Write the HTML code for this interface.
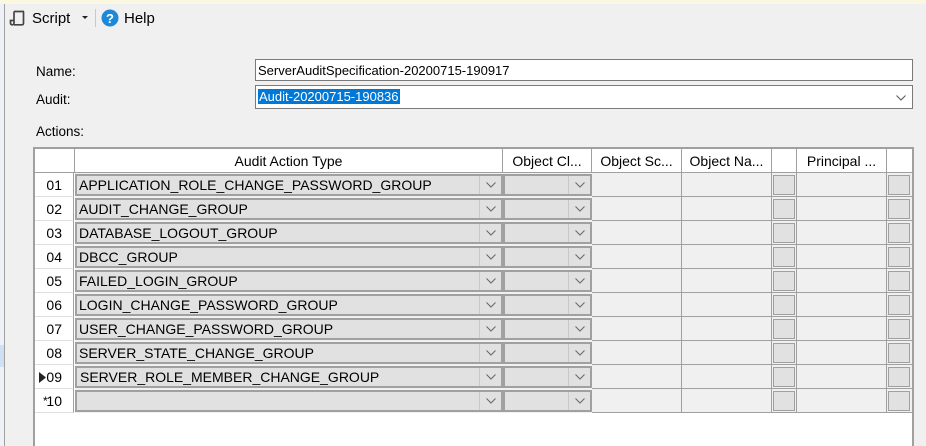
<!DOCTYPE html>
<html><head><style>
*{margin:0;padding:0;box-sizing:border-box}
body{width:926px;height:446px;background:#f0f0f0;font-family:"Liberation Sans",sans-serif;font-size:13px;color:#000;position:relative;overflow:hidden}
.a{position:absolute}
.row{position:absolute;left:35px;width:877px;height:24px;font-size:14px}
.c{position:absolute;top:0;height:24px;border-right:1px solid #a0a0a0;border-bottom:1px solid #a0a0a0}
.cb{position:absolute;top:1px;height:22px;background:#e1e1e1;border:2px solid #a0a0a0}
.ar{position:absolute;right:0;top:0;width:22px;height:18px;border-left:1px solid #c8c8c8}
.ar svg{position:absolute;left:6px;top:6px}
.chk{position:absolute;top:2px;height:20px;background:#e1e1e1;border:1px solid #a0a0a0}
.hd{position:absolute;top:0;height:24px;line-height:24px;text-align:center;border-right:1px solid #a0a0a0;border-bottom:1px solid #a0a0a0;background:#fff;font-size:14px}
.txt{position:absolute;left:2px;top:1px;line-height:17px;font-size:14px}
.num{position:absolute;left:0;width:39px;height:24px;line-height:24px;text-align:right;padding-right:11px;background:#fff;border-right:1px solid #a0a0a0;border-bottom:1px solid #e0e0e0}
</style></head><body>
<div class="a" style="left:0;top:0;width:926px;height:4px;background:#fbf8e2"></div>
<div class="a" style="left:0;top:4px;width:4px;height:442px;background:#eef2f8"></div>
<div class="a" style="left:4px;top:4px;width:1px;height:442px;background:#a0a0a0"></div>
<div class="a" style="left:0;top:345px;width:4px;height:22px;background:#cfe0f4"></div>
<svg class="a" style="left:9px;top:9px" width="17" height="17" viewBox="0 0 17 17"><path d="M5 2.5h10M5 2.5v11.5c0 1-0.7 1.8-1.8 1.8S1.5 15 1.5 14v-2.5H5M5 15.8h8c1 0 1.5-.8 1.5-1.8V2.5" fill="none" stroke="#444" stroke-width="1.7"/></svg>
<div class="a" style="left:32px;top:10px;font-size:15px">Script</div>
<svg class="a" style="left:82px;top:16px" width="6" height="4"><path d="M0 0h6L3 3z" fill="#222"/></svg>
<div class="a" style="left:95px;top:9px;width:1px;height:18px;background:#c8c8c8"></div>
<svg class="a" style="left:101px;top:9px" width="18" height="18"><circle cx="9" cy="9" r="8.5" fill="#1e88d8"/><text x="9" y="14" font-family="Liberation Sans" font-weight="bold" font-size="13" fill="#fff" text-anchor="middle">?</text></svg>
<div class="a" style="left:124px;top:10px;font-size:15px">Help</div>
<div class="a" style="left:36px;top:64px;font-size:13.5px">Name:</div>
<div class="a" style="left:36px;top:92px;font-size:13.5px">Audit:</div>
<div class="a" style="left:36px;top:124px;font-size:13.5px">Actions:</div>
<div class="a" style="left:255px;top:59px;width:658px;height:22px;background:#fff;border:1px solid #7a7a7a"><span style="position:absolute;left:2px;top:3px">ServerAuditSpecification-20200715-190917</span></div>
<div class="a" style="left:255px;top:85px;width:658px;height:24px;background:#fff;border:1px solid #7a7a7a"><span style="position:absolute;left:2px;top:3px;background:#0078d7;color:#fff;padding:0 1px">Audit-20200715-190836</span><svg style="position:absolute;right:6px;top:9px" width="10" height="6"><path d="M0.5 0.5l4.5 4.5 4.5-4.5" fill="none" stroke="#555"/></svg></div>
<div class="a" style="left:33px;top:147px;width:881px;height:299px;background:#fff;border:2px solid #a0a0a0;border-bottom:none"></div>
<div class="row" style="top:149px">
<div class="hd" style="left:0;width:40px"></div>
<div class="hd" style="left:40px;width:428px">Audit Action Type</div>
<div class="hd" style="left:468px;width:89px">Object Cl...</div>
<div class="hd" style="left:557px;width:90px">Object Sc...</div>
<div class="hd" style="left:647px;width:90px">Object Na...</div>
<div class="hd" style="left:737px;width:25px"></div>
<div class="hd" style="left:762px;width:90px">Principal ...</div>
<div class="hd" style="left:852px;width:25px;border-right:none"></div>
</div>
<div class="row" style="top:173px"><div class="num">01</div><div class="c" style="left:40px;width:837px;background:#f0f0f0;border:none"></div><div class="cb" style="left:40px;width:428px"><span class="txt">APPLICATION_ROLE_CHANGE_PASSWORD_GROUP</span><div class="ar"><svg width="10" height="6"><path d="M0.5 0.5l4.5 4.5 4.5-4.5" fill="none" stroke="#666"/></svg></div></div><div class="cb" style="left:468px;width:89px"><div class="ar"><svg width="10" height="6"><path d="M0.5 0.5l4.5 4.5 4.5-4.5" fill="none" stroke="#666"/></svg></div></div><div class="c" style="left:557px;width:90px"></div><div class="c" style="left:647px;width:90px"></div><div class="c" style="left:737px;width:25px"><div class="chk" style="left:1px;width:22px"></div></div><div class="c" style="left:762px;width:90px"></div><div class="c" style="left:852px;width:25px;border-right:none"><div class="chk" style="left:1px;width:22px"></div></div></div>
<div class="row" style="top:197px"><div class="num">02</div><div class="c" style="left:40px;width:837px;background:#f0f0f0;border:none"></div><div class="cb" style="left:40px;width:428px"><span class="txt">AUDIT_CHANGE_GROUP</span><div class="ar"><svg width="10" height="6"><path d="M0.5 0.5l4.5 4.5 4.5-4.5" fill="none" stroke="#666"/></svg></div></div><div class="cb" style="left:468px;width:89px"><div class="ar"><svg width="10" height="6"><path d="M0.5 0.5l4.5 4.5 4.5-4.5" fill="none" stroke="#666"/></svg></div></div><div class="c" style="left:557px;width:90px"></div><div class="c" style="left:647px;width:90px"></div><div class="c" style="left:737px;width:25px"><div class="chk" style="left:1px;width:22px"></div></div><div class="c" style="left:762px;width:90px"></div><div class="c" style="left:852px;width:25px;border-right:none"><div class="chk" style="left:1px;width:22px"></div></div></div>
<div class="row" style="top:221px"><div class="num">03</div><div class="c" style="left:40px;width:837px;background:#f0f0f0;border:none"></div><div class="cb" style="left:40px;width:428px"><span class="txt">DATABASE_LOGOUT_GROUP</span><div class="ar"><svg width="10" height="6"><path d="M0.5 0.5l4.5 4.5 4.5-4.5" fill="none" stroke="#666"/></svg></div></div><div class="cb" style="left:468px;width:89px"><div class="ar"><svg width="10" height="6"><path d="M0.5 0.5l4.5 4.5 4.5-4.5" fill="none" stroke="#666"/></svg></div></div><div class="c" style="left:557px;width:90px"></div><div class="c" style="left:647px;width:90px"></div><div class="c" style="left:737px;width:25px"><div class="chk" style="left:1px;width:22px"></div></div><div class="c" style="left:762px;width:90px"></div><div class="c" style="left:852px;width:25px;border-right:none"><div class="chk" style="left:1px;width:22px"></div></div></div>
<div class="row" style="top:245px"><div class="num">04</div><div class="c" style="left:40px;width:837px;background:#f0f0f0;border:none"></div><div class="cb" style="left:40px;width:428px"><span class="txt">DBCC_GROUP</span><div class="ar"><svg width="10" height="6"><path d="M0.5 0.5l4.5 4.5 4.5-4.5" fill="none" stroke="#666"/></svg></div></div><div class="cb" style="left:468px;width:89px"><div class="ar"><svg width="10" height="6"><path d="M0.5 0.5l4.5 4.5 4.5-4.5" fill="none" stroke="#666"/></svg></div></div><div class="c" style="left:557px;width:90px"></div><div class="c" style="left:647px;width:90px"></div><div class="c" style="left:737px;width:25px"><div class="chk" style="left:1px;width:22px"></div></div><div class="c" style="left:762px;width:90px"></div><div class="c" style="left:852px;width:25px;border-right:none"><div class="chk" style="left:1px;width:22px"></div></div></div>
<div class="row" style="top:269px"><div class="num">05</div><div class="c" style="left:40px;width:837px;background:#f0f0f0;border:none"></div><div class="cb" style="left:40px;width:428px"><span class="txt">FAILED_LOGIN_GROUP</span><div class="ar"><svg width="10" height="6"><path d="M0.5 0.5l4.5 4.5 4.5-4.5" fill="none" stroke="#666"/></svg></div></div><div class="cb" style="left:468px;width:89px"><div class="ar"><svg width="10" height="6"><path d="M0.5 0.5l4.5 4.5 4.5-4.5" fill="none" stroke="#666"/></svg></div></div><div class="c" style="left:557px;width:90px"></div><div class="c" style="left:647px;width:90px"></div><div class="c" style="left:737px;width:25px"><div class="chk" style="left:1px;width:22px"></div></div><div class="c" style="left:762px;width:90px"></div><div class="c" style="left:852px;width:25px;border-right:none"><div class="chk" style="left:1px;width:22px"></div></div></div>
<div class="row" style="top:293px"><div class="num">06</div><div class="c" style="left:40px;width:837px;background:#f0f0f0;border:none"></div><div class="cb" style="left:40px;width:428px"><span class="txt">LOGIN_CHANGE_PASSWORD_GROUP</span><div class="ar"><svg width="10" height="6"><path d="M0.5 0.5l4.5 4.5 4.5-4.5" fill="none" stroke="#666"/></svg></div></div><div class="cb" style="left:468px;width:89px"><div class="ar"><svg width="10" height="6"><path d="M0.5 0.5l4.5 4.5 4.5-4.5" fill="none" stroke="#666"/></svg></div></div><div class="c" style="left:557px;width:90px"></div><div class="c" style="left:647px;width:90px"></div><div class="c" style="left:737px;width:25px"><div class="chk" style="left:1px;width:22px"></div></div><div class="c" style="left:762px;width:90px"></div><div class="c" style="left:852px;width:25px;border-right:none"><div class="chk" style="left:1px;width:22px"></div></div></div>
<div class="row" style="top:317px"><div class="num">07</div><div class="c" style="left:40px;width:837px;background:#f0f0f0;border:none"></div><div class="cb" style="left:40px;width:428px"><span class="txt">USER_CHANGE_PASSWORD_GROUP</span><div class="ar"><svg width="10" height="6"><path d="M0.5 0.5l4.5 4.5 4.5-4.5" fill="none" stroke="#666"/></svg></div></div><div class="cb" style="left:468px;width:89px"><div class="ar"><svg width="10" height="6"><path d="M0.5 0.5l4.5 4.5 4.5-4.5" fill="none" stroke="#666"/></svg></div></div><div class="c" style="left:557px;width:90px"></div><div class="c" style="left:647px;width:90px"></div><div class="c" style="left:737px;width:25px"><div class="chk" style="left:1px;width:22px"></div></div><div class="c" style="left:762px;width:90px"></div><div class="c" style="left:852px;width:25px;border-right:none"><div class="chk" style="left:1px;width:22px"></div></div></div>
<div class="row" style="top:341px"><div class="num">08</div><div class="c" style="left:40px;width:837px;background:#f0f0f0;border:none"></div><div class="cb" style="left:40px;width:428px"><span class="txt">SERVER_STATE_CHANGE_GROUP</span><div class="ar"><svg width="10" height="6"><path d="M0.5 0.5l4.5 4.5 4.5-4.5" fill="none" stroke="#666"/></svg></div></div><div class="cb" style="left:468px;width:89px"><div class="ar"><svg width="10" height="6"><path d="M0.5 0.5l4.5 4.5 4.5-4.5" fill="none" stroke="#666"/></svg></div></div><div class="c" style="left:557px;width:90px"></div><div class="c" style="left:647px;width:90px"></div><div class="c" style="left:737px;width:25px"><div class="chk" style="left:1px;width:22px"></div></div><div class="c" style="left:762px;width:90px"></div><div class="c" style="left:852px;width:25px;border-right:none"><div class="chk" style="left:1px;width:22px"></div></div></div>
<div class="row" style="top:365px"><div class="num">09<svg style="position:absolute;left:4px;top:7px" width="7" height="11"><path d="M0 0l7 5.5L0 11z" fill="#222"/></svg></div><div class="c" style="left:40px;width:837px;background:#f0f0f0;border:none"></div><div class="cb" style="left:40px;width:428px"><span class="txt" style="left:3px">SERVER_ROLE_MEMBER_CHANGE_GROUP</span><div class="ar"><svg width="10" height="6"><path d="M0.5 0.5l4.5 4.5 4.5-4.5" fill="none" stroke="#666"/></svg></div></div><div class="cb" style="left:468px;width:89px"><div class="ar"><svg width="10" height="6"><path d="M0.5 0.5l4.5 4.5 4.5-4.5" fill="none" stroke="#666"/></svg></div></div><div class="c" style="left:557px;width:90px"></div><div class="c" style="left:647px;width:90px"></div><div class="c" style="left:737px;width:25px"><div class="chk" style="left:1px;width:22px"></div></div><div class="c" style="left:762px;width:90px"></div><div class="c" style="left:852px;width:25px;border-right:none"><div class="chk" style="left:1px;width:22px"></div></div></div>
<div class="row" style="top:389px"><div class="num">10<span style="position:absolute;left:8px;top:0;font-size:12px">*</span></div><div class="c" style="left:40px;width:837px;background:#f0f0f0;border:none"></div><div class="cb" style="left:40px;width:428px"><div class="ar"><svg width="10" height="6"><path d="M0.5 0.5l4.5 4.5 4.5-4.5" fill="none" stroke="#666"/></svg></div></div><div class="cb" style="left:468px;width:89px"><div class="ar"><svg width="10" height="6"><path d="M0.5 0.5l4.5 4.5 4.5-4.5" fill="none" stroke="#666"/></svg></div></div><div class="c" style="left:557px;width:90px"></div><div class="c" style="left:647px;width:90px"></div><div class="c" style="left:737px;width:25px"><div class="chk" style="left:1px;width:22px"></div></div><div class="c" style="left:762px;width:90px"></div><div class="c" style="left:852px;width:25px;border-right:none"><div class="chk" style="left:1px;width:22px"></div></div></div>
</body></html>
